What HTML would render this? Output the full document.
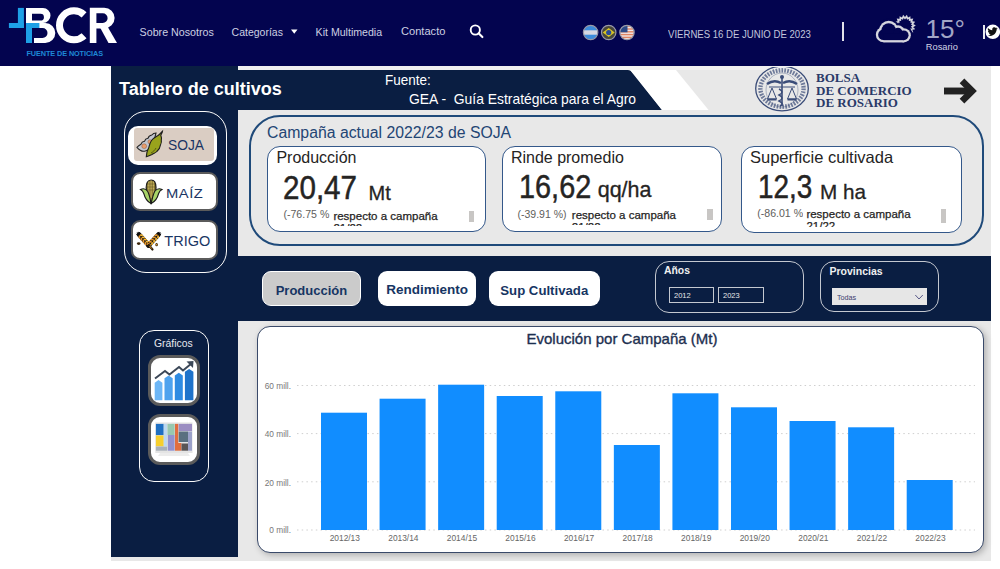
<!DOCTYPE html>
<html><head><meta charset="utf-8">
<style>
*{box-sizing:border-box;margin:0;padding:0}
html,body{width:1000px;height:569px;overflow:hidden;background:#fff;position:relative;font-family:"Liberation Sans",sans-serif}
.a{position:absolute}
.t{position:absolute;white-space:nowrap;line-height:1}
</style></head><body>
<!-- HEADER -->
<div class="a" id="hdr" style="left:0;top:0;width:1000px;height:66px;background:#03044f"></div>
<svg class="a" style="left:0;top:0" width="125" height="66">
  <g fill="#fff">
    <path fill-rule="evenodd" d="M26 8 H43 A7.5 7.5 0 0 1 43 23 H26 Z M32 13.7 H40.5 A3.45 3.45 0 0 1 40.5 20.6 H32 Z"/>
    <path fill-rule="evenodd" d="M34 23 H45.3 A10 10 0 0 1 45.3 43 H34 Z M34 28 H42.5 A5 5 0 0 1 42.5 38 H34 Z"/>
    <path d="M84.07 14.87 A14.5 14.5 0 1 0 84.07 35.73" fill="none" stroke="#fff" stroke-width="7"/>
    <path fill-rule="evenodd" d="M89.8 7.7 H104.25 A10.35 10.35 0 0 1 104.25 28.4 H96.4 V43 H89.8 Z M96.4 13.3 H102.75 A4.85 4.85 0 0 1 102.75 23 H96.4 Z"/>
    <path d="M99.5 26.5 H107.5 L117 43 H108.5 Z"/>
  </g>
  <g fill="#1ea0e6">
    <rect x="17.9" y="7.9" width="6" height="20.1"/>
    <rect x="8.9" y="23" width="15" height="5"/>
    <rect x="26" y="23" width="6" height="20"/>
    <rect x="26" y="23" width="13.4" height="5"/>
  </g>
</svg>
<div class="t" style="left:26.5px;top:49.6px;font-size:7.3px;font-weight:bold;color:#1e88d6;letter-spacing:-0.1px">FUENTE DE NOTICIAS</div>
<div class="t" style="left:139.6px;top:26.6px;font-size:10.7px;color:#cdd0e2">Sobre Nosotros</div>
<div class="t" style="left:231.6px;top:26.7px;font-size:10.5px;color:#cdd0e2">Categorías</div>
<svg class="a" style="left:290px;top:29px" width="9" height="6"><path d="M1 0.5 H7.5 L4.25 4.8 Z" fill="#fff"/></svg>
<div class="t" style="left:315.6px;top:26.6px;font-size:10.6px;color:#cdd0e2">Kit Multimedia</div>
<div class="t" style="left:401px;top:26.2px;font-size:11.1px;color:#cdd0e2">Contacto</div>
<svg class="a" style="left:467.2px;top:22.3px" width="20" height="18">
  <circle cx="8.3" cy="8" r="4.6" fill="none" stroke="#fff" stroke-width="1.9"/>
  <path d="M11.6 11.3 L15.4 15.1" stroke="#fff" stroke-width="2.1" stroke-linecap="round"/>
</svg>
<svg class="a" style="left:580px;top:22px" width="60" height="22">
  <defs>
    <clipPath id="c1"><circle cx="10.6" cy="10.5" r="7"/></clipPath>
    <clipPath id="c2"><circle cx="28.7" cy="10.5" r="7"/></clipPath>
    <clipPath id="c3"><circle cx="47" cy="10.5" r="7"/></clipPath>
  </defs>
  <g clip-path="url(#c1)"><rect x="0" y="0" width="20" height="22" fill="#3c8cdc"/><rect x="0" y="8.3" width="20" height="4.4" fill="#d6d8e2"/></g>
  <g clip-path="url(#c2)"><rect x="18" y="0" width="20" height="22" fill="#47473a"/><path d="M22.7 10.5 L28.7 6 L34.7 10.5 L28.7 15 Z" fill="#d8c424"/><circle cx="28.7" cy="10.5" r="2.6" fill="#2a4a98"/></g>
  <g clip-path="url(#c3)"><rect x="38" y="0" width="20" height="22" fill="#f0e6e6"/>
    <rect x="38" y="3.5" width="20" height="1.4" fill="#e08462"/><rect x="38" y="6.3" width="20" height="1.4" fill="#e08462"/><rect x="38" y="9.1" width="20" height="1.4" fill="#e08462"/><rect x="38" y="11.9" width="20" height="1.4" fill="#e08462"/><rect x="38" y="14.7" width="20" height="1.4" fill="#e08462"/><rect x="38" y="17.5" width="20" height="1.4" fill="#e08462"/>
    <rect x="38" y="2" width="9.5" height="8.3" fill="#2c4a88"/></g>
  <circle cx="10.6" cy="10.5" r="7.2" fill="none" stroke="#9a9aa8" stroke-width="1.2"/>
  <circle cx="28.7" cy="10.5" r="7.2" fill="none" stroke="#9a9aa8" stroke-width="1.2"/>
  <circle cx="47" cy="10.5" r="7.2" fill="none" stroke="#9a9aa8" stroke-width="1.2"/>
</svg>
<div class="t" style="left:667.5px;top:28.6px;font-size:10.6px;color:#c2c6dc;transform:scaleX(0.905);transform-origin:0 0">VIERNES 16 DE JUNIO DE 2023</div>
<div class="a" style="left:841.5px;top:22px;width:2px;height:19px;background:#e2e2ea"></div>
<svg class="a" style="left:870px;top:10px" width="52" height="38">
  <polygon points="44.20,15.50 42.19,16.77 43.65,18.65 41.32,19.15 42.05,21.41 39.69,21.09 39.60,23.47 37.50,22.36 36.60,24.56 35.00,22.80 33.40,24.56 32.50,22.36 30.40,23.47 30.31,21.09 27.95,21.41 28.68,19.15 26.35,18.65 27.81,16.77 25.80,15.50 27.81,14.23 26.35,12.35 28.68,11.85 27.95,9.59 30.31,9.91 30.40,7.53 32.50,8.64 33.40,6.44 35.00,8.20 36.60,6.44 37.50,8.64 39.60,7.53 39.69,9.91 42.05,9.59 41.32,11.85 43.65,12.35 42.19,14.23" fill="none" stroke="#d6d6de" stroke-width="1.7"/>
  <circle cx="13.5" cy="24.7" r="9.7" fill="#03044f"/><circle cx="18.7" cy="20.3" r="11.5" fill="#03044f"/><circle cx="28" cy="22" r="8.7" fill="#03044f"/><circle cx="33.7" cy="25.3" r="9.2" fill="#03044f"/><rect x="13.5" y="18.8" width="20.2" height="15.700000000000001" fill="#03044f"/>
  <circle cx="13.5" cy="24.7" r="7.65" fill="#d6d6de"/><circle cx="18.7" cy="20.3" r="9.450000000000001" fill="#d6d6de"/><circle cx="28" cy="22" r="6.65" fill="#d6d6de"/><circle cx="33.7" cy="25.3" r="7.15" fill="#d6d6de"/><rect x="13.5" y="20.85" width="20.2" height="11.600000000000001" fill="#d6d6de"/>
  <circle cx="13.5" cy="24.7" r="5.35" fill="#03044f"/><circle cx="18.7" cy="20.3" r="7.15" fill="#03044f"/><circle cx="28" cy="22" r="4.35" fill="#03044f"/><circle cx="33.7" cy="25.3" r="4.85" fill="#03044f"/><rect x="13.5" y="23.15" width="20.2" height="7.000000000000001" fill="#03044f"/>
</svg>
<div class="t" style="left:925.5px;top:16.3px;font-size:26px;color:#a2a6c6">15°</div>
<div class="t" style="left:925.8px;top:42.8px;font-size:9.3px;color:#d2d4e4">Rosario</div>
<div class="a" style="left:983px;top:24.7px;width:2px;height:14px;background:#e8e8ee"></div>
<svg class="a" style="left:984px;top:22px" width="16" height="20">
  <circle cx="8.8" cy="9.8" r="7.3" fill="#fff"/>
  <g transform="translate(8.8 9.8) scale(1.15) translate(-8.8 -9.2)"><path d="M4.5 12.5 C7 13.2 10 12.5 11.5 9.5 C12 8.5 12.2 7.6 12.2 7 L13.2 6.2 L12 6.4 L12.6 5.4 L11.5 5.8 C10.7 4.9 9 5 8.4 6.4 C8.2 7 8.3 7.4 8.4 7.8 C6.8 7.7 5.6 7 4.6 5.9 C4.2 7 4.6 8 5.3 8.6 L4.6 8.4 C4.7 9.4 5.3 10 6.1 10.3 L5.4 10.4 C5.7 11.1 6.4 11.5 7.1 11.6 C6.4 12.2 5.5 12.5 4.5 12.5 Z" fill="#111"/></g>
</svg>

<!-- DASHBOARD BG -->
<div class="a" style="left:111px;top:66px;width:880px;height:495px;background:#e8e8e8"></div>
<div class="a" style="left:111px;top:66px;width:127px;height:491px;background:#0a1e42"></div>
<div class="a" style="left:238px;top:66px;width:753px;height:3.5px;background:#f0f0f0"></div>
<svg class="a" style="left:238px;top:70px" width="480" height="40">
  <path d="M0 0 H390 Q393 0 395 3 L424 40 H0 Z" fill="#0a1e42"/>
  <path d="M392 0 H438 L470.6 40 H424 Z" fill="#fff"/>
</svg>
<div class="t" style="left:119px;top:80.2px;font-size:18px;font-weight:bold;color:#fff">Tablero de cultivos</div>
<div class="t" style="left:384.5px;top:72.8px;font-size:14.5px;color:#fff;transform:scaleX(0.93);transform-origin:0 0">Fuente:</div>
<div class="t" style="left:409.3px;top:92.1px;font-size:14.5px;color:#fff;transform:scaleX(0.958);transform-origin:0 0">GEA -&nbsp; Guía Estratégica para el Agro</div>



<!-- BCR logo in banner -->
<svg class="a" style="left:750px;top:67px" width="64" height="46">
  <g fill="none" stroke="#3a4c78" transform="translate(0,-1)">
    <ellipse cx="32" cy="22.5" rx="26.3" ry="22.3" stroke-width="1.3"/>
    <ellipse cx="32" cy="22.5" rx="21.6" ry="18.2" stroke-width="4.4" stroke-dasharray="1.7 1.2" opacity="0.7"/>
    <ellipse cx="32" cy="24" rx="16" ry="17" stroke-width="0.7" opacity="0.5"/>
    <path d="M32 10 V40" stroke-width="1.6"/>
    <path d="M17 18 Q24 13 31 17 M47 18 Q40 13 33 17" stroke-width="2.4"/>
    <path d="M19 21 H45" stroke-width="1"/>
    <path d="M22 22 L17.5 33 H26.5 Z M42 22 L37.5 33 H46.5 Z" stroke-width="1"/>
    <path d="M17.5 33.5 H26.5 M37.5 33.5 H46.5" stroke-width="1.8"/>
    <path d="M29 23 Q35 26 29 29 Q35 32 29 35 Q35 38 30 40" stroke-width="1.4"/>
  </g>
  <circle cx="32" cy="10" r="2" fill="#3a4c78"/>
</svg>
<div class="t" style="left:816px;top:70.91px;font-size:13px;color:#2a3a68;font-family:'Liberation Serif',serif;font-weight:bold">BOLSA</div>
<div class="t" style="left:816px;top:83.51px;font-size:13px;color:#2a3a68;font-family:'Liberation Serif',serif;font-weight:bold">DE COMERCIO</div>
<div class="t" style="left:816px;top:95.71px;font-size:13px;color:#2a3a68;font-family:'Liberation Serif',serif;font-weight:bold">DE ROSARIO</div>
<svg class="a" style="left:940px;top:76px" width="40" height="30">
  <path d="M4 15 H31" stroke="#222" stroke-width="6.9"/>
  <path d="M22 4.8 L32.2 15 L22 25.2" fill="none" stroke="#222" stroke-width="6.6" stroke-linejoin="miter"/>
</svg>

<!-- SIDEBAR -->
<div class="a" style="left:123.5px;top:110.5px;width:103px;height:162px;border:1.9px solid #fafafa;border-radius:22px"></div>
<div class="a" style="left:128.3px;top:125.5px;width:89px;height:39.3px;background:#fff;border-radius:10px"></div>
<div class="a" style="left:133.8px;top:127.9px;width:80.2px;height:33px;background:#dacdc3;border-radius:3px"></div>
<svg class="a" style="left:134px;top:128px" width="32" height="32">
  <path d="M3 19.3 C4.5 17.5 6 16.8 7 16.2 C7.5 14.5 9 13.5 10.5 13.3 C11 11.5 12.5 10.5 14 10.3 C14.5 8.5 16 7.3 17.8 7 C19 5.5 20.5 5 22 5 L19 17 C17 20 14 22.5 10.5 23.2 C7.5 23.5 5 21.8 3 19.3 Z" fill="#c3c6cf" stroke="#222" stroke-width="1.1"/>
  <circle cx="10.2" cy="18.2" r="2.4" fill="#e99c6c" stroke="#7a4a2a" stroke-width="0.4"/>
  <circle cx="16" cy="13.8" r="2.1" fill="#e99c6c" stroke="#7a4a2a" stroke-width="0.4"/>
  <path d="M12.3 28.8 C12.3 25 13.5 22 14.8 19.5 C15.5 17 16 14.5 17.5 12.5 C19.5 10 21.5 9 24 7.5 C25.5 6.5 26.5 5 28.5 3.2 C28.3 5 27.3 6 26.8 7.2 C27.3 8.5 27.8 10 27.3 12 C27.8 14 27 16 26.3 17.5 C26.2 20 24.5 22 22.8 23.5 C21.5 25 19.5 25.5 18 26.5 C16 27.5 14.3 28.2 12.3 28.8 Z" fill="#99a31c" stroke="#1e1e1e" stroke-width="1.1"/>
  <path d="M17 25 C19 24 21 22 22 20" fill="none" stroke="#3a3a10" stroke-width="0.7"/>
</svg>
<div class="t" style="left:168px;top:139px;font-size:13.8px;color:#1a3563">SOJA</div>

<div class="a" style="left:130.5px;top:172.3px;width:87px;height:39.2px;background:#fff;border:2px solid #5b5b5b;border-radius:9px"></div>
<svg class="a" style="left:136px;top:176px" width="32" height="32">
  <path d="M15.1 4 C18.6 4 20 7.5 20 11.5 C20 17 18 22 15.1 27 C12.2 22 10.2 17 10.2 11.5 C10.2 7.5 11.6 4 15.1 4 Z" fill="#8c7c34" stroke="#1a1a1a" stroke-width="1.2"/>
  <path d="M12.8 5.5 V19 M15.1 4.5 V22 M17.4 5.5 V19" stroke="#d4bf66" stroke-width="0.9"/>
  <path d="M10.5 8 H19.7 M10.3 11 H19.9 M10.5 14 H19.7" stroke="#5a4a20" stroke-width="0.5"/>
  <path d="M4.5 13.5 C7.5 12 10 13 11.8 15.5 C13.2 18.5 14.2 22.5 15 27.5 C11 25.5 8.8 21.5 7.8 17.5 C7.2 15.5 6.2 14.3 4.5 13.5 Z" fill="#a8d468" stroke="#1a1a1a" stroke-width="1.1"/>
  <path d="M26 13.5 C23 12 20.5 13 18.6 15.5 C17.2 18.5 16.2 22.5 15.2 27.5 C19.4 25.5 21.6 21.5 22.6 17.5 C23.2 15.5 24.3 14.3 26 13.5 Z" fill="#a8d468" stroke="#1a1a1a" stroke-width="1.1"/>
</svg>
<div class="t" style="left:166.2px;top:186.6px;font-size:13.4px;color:#1a3563;letter-spacing:0.5px;transform:scaleX(1.1);transform-origin:0 0">MAÍZ</div>

<div class="a" style="left:130.5px;top:220px;width:87px;height:39.7px;background:#fff;border:2px solid #5b5b5b;border-radius:9px"></div>
<svg class="a" style="left:132px;top:224px" width="34" height="32">
  <path d="M7 10.5 L16.9 21.5" stroke="#111" stroke-width="4.8" stroke-linecap="round"/><ellipse cx="9.36" cy="11.18" rx="1.7" ry="0.95" transform="rotate(8.0 9.36 11.18)" fill="#f6b838"/><ellipse cx="7.43" cy="12.92" rx="1.7" ry="0.95" transform="rotate(88.0 7.43 12.92)" fill="#e8962a"/><ellipse cx="11.34" cy="13.38" rx="1.7" ry="0.95" transform="rotate(8.0 11.34 13.38)" fill="#f6b838"/><ellipse cx="9.41" cy="15.12" rx="1.7" ry="0.95" transform="rotate(88.0 9.41 15.12)" fill="#e8962a"/><ellipse cx="13.32" cy="15.58" rx="1.7" ry="0.95" transform="rotate(8.0 13.32 15.58)" fill="#f6b838"/><ellipse cx="11.39" cy="17.32" rx="1.7" ry="0.95" transform="rotate(88.0 11.39 17.32)" fill="#e8962a"/><ellipse cx="15.30" cy="17.78" rx="1.7" ry="0.95" transform="rotate(8.0 15.30 17.78)" fill="#f6b838"/><ellipse cx="13.37" cy="19.52" rx="1.7" ry="0.95" transform="rotate(88.0 13.37 19.52)" fill="#e8962a"/><ellipse cx="17.28" cy="19.98" rx="1.7" ry="0.95" transform="rotate(8.0 17.28 19.98)" fill="#f6b838"/><ellipse cx="15.35" cy="21.72" rx="1.7" ry="0.95" transform="rotate(88.0 15.35 21.72)" fill="#e8962a"/><path d="M8.11 9.50 l-1.47 -1.64 M5.89 11.50 l-1.47 -1.64 M7.00 10.50 l-1.87 -2.08" stroke="#111" stroke-width="0.9"/>
  <path d="M26.5 10.5 L16.5 21.5" stroke="#111" stroke-width="4.8" stroke-linecap="round"/><ellipse cx="26.06" cy="12.92" rx="1.7" ry="0.95" transform="rotate(92.3 26.06 12.92)" fill="#f6b838"/><ellipse cx="24.13" cy="11.17" rx="1.7" ry="0.95" transform="rotate(172.3 24.13 11.17)" fill="#e8962a"/><ellipse cx="24.06" cy="15.12" rx="1.7" ry="0.95" transform="rotate(92.3 24.06 15.12)" fill="#f6b838"/><ellipse cx="22.13" cy="13.37" rx="1.7" ry="0.95" transform="rotate(172.3 22.13 13.37)" fill="#e8962a"/><ellipse cx="22.06" cy="17.32" rx="1.7" ry="0.95" transform="rotate(92.3 22.06 17.32)" fill="#f6b838"/><ellipse cx="20.13" cy="15.57" rx="1.7" ry="0.95" transform="rotate(172.3 20.13 15.57)" fill="#e8962a"/><ellipse cx="20.06" cy="19.52" rx="1.7" ry="0.95" transform="rotate(92.3 20.06 19.52)" fill="#f6b838"/><ellipse cx="18.13" cy="17.77" rx="1.7" ry="0.95" transform="rotate(172.3 18.13 17.77)" fill="#e8962a"/><ellipse cx="18.06" cy="21.72" rx="1.7" ry="0.95" transform="rotate(92.3 18.06 21.72)" fill="#f6b838"/><ellipse cx="16.13" cy="19.97" rx="1.7" ry="0.95" transform="rotate(172.3 16.13 19.97)" fill="#e8962a"/><path d="M27.61 11.51 l1.48 -1.63 M25.39 9.49 l1.48 -1.63 M26.50 10.50 l1.88 -2.07" stroke="#111" stroke-width="0.9"/>
  <path d="M16.7 21 L20.5 25.5" stroke="#2a1a08" stroke-width="2.2" stroke-linecap="round"/>
  <path d="M17.5 22 L19.8 24.6" stroke="#e8a030" stroke-width="0.9"/>
  <ellipse cx="6.7" cy="19.6" rx="1.8" ry="1.3" fill="#3a2408"/>
  <ellipse cx="24.6" cy="20.7" rx="1.3" ry="1.6" fill="#3a2408"/><circle cx="24.6" cy="20.7" r="0.7" fill="#e8a030"/>
</svg>
<div class="t" style="left:164.3px;top:233.8px;font-size:14.5px;color:#1a3563">TRIGO</div>

<div class="a" style="left:138.5px;top:330px;width:70px;height:151.5px;border:1.9px solid #fafafa;border-radius:15px"></div>
<div class="t" style="left:154px;top:337.5px;font-size:10.8px;transform:scaleX(0.96);transform-origin:0 0;color:#e8e8ee">Gráficos</div>
<div class="a" style="left:148.2px;top:355px;width:52px;height:51px;background:#fff;border:3px solid #5b5b5b;border-radius:12px"></div>
<svg class="a" style="left:148px;top:355px" width="52" height="51">
  <path d="M6.7 27.7 L10.5 25 L14.4 27.7 V45.2 H6.7 Z" fill="#6cb6f6"/>
  <path d="M16.5 23.3 L20.6 20.5 L24.7 23.3 V45.2 H16.5 Z" fill="#4ea2ee"/>
  <path d="M26.8 20.5 L30.8 17.7 L34.8 20.5 V45.2 H26.8 Z" fill="#2f8be2"/>
  <path d="M36.9 16.7 L41.1 13.9 L45.4 16.7 V45.2 H36.9 Z" fill="#1f73cb"/>
  <path d="M7 23.5 L17 16 L21.5 19.5 L31 12 L35 15.5 L43.5 8.5" fill="none" stroke="#3c4858" stroke-width="2"/>
  <path d="M38.5 6.5 L45.5 6 L45 13 Z" fill="#3c4858"/>
</svg>
<div class="a" style="left:148.2px;top:414px;width:52px;height:50.5px;background:#fff;border:3px solid #5b5b5b;border-radius:12px"></div>
<svg class="a" style="left:148px;top:414px" width="52" height="51">
  <rect x="7.3" y="8.4" width="37.2" height="30.6" fill="#e4e4e4"/>
  <path d="M12 39 L10 42 H42 L40 39 Z" fill="#ececec"/>
  <rect x="7.9" y="9.9" width="7.8" height="11.2" fill="#1f6fc2"/>
  <rect x="7.9" y="21.5" width="7.8" height="10.8" fill="#f6cf2e"/>
  <rect x="7.9" y="32.5" width="11.2" height="4.2" fill="#a9b1b9"/>
  <rect x="15.7" y="9.9" width="3.4" height="22.4" fill="#bcd8f0"/>
  <rect x="19.5" y="9.9" width="7.1" height="11.1" fill="#98c8b0"/>
  <rect x="19.8" y="21" width="6.8" height="15.7" fill="#9292d0"/>
  <rect x="27" y="9.9" width="3.3" height="19.1" fill="#e06e40"/>
  <rect x="30.7" y="9.9" width="13.3" height="7.1" fill="#9b8dc2"/>
  <rect x="30.7" y="17.5" width="9.3" height="10.5" fill="#5a7080"/>
  <rect x="40" y="17.5" width="4" height="19.2" fill="#9ca2ca"/>
  <rect x="27" y="29" width="6.4" height="7.7" fill="#e06e40"/>
  <rect x="33.5" y="29.5" width="6.5" height="7.2" fill="#5a5656"/>
</svg>

<!-- Campaña box -->
<div class="a" style="left:249.2px;top:115px;width:734.6px;height:131.2px;border:2px solid #1f4a7a;border-radius:31px"></div>
<div class="t" style="left:267px;top:125px;font-size:15.8px;color:#234574">Campaña actual 2022/23 de SOJA</div>

<div class="a" style="left:267px;top:146px;width:219px;height:86px;background:#fff;border:1px solid #34588a;border-radius:13px"></div>
<div class="a" style="left:502px;top:145.5px;width:220px;height:86.5px;background:#fff;border:1px solid #34588a;border-radius:13px"></div>
<div class="a" style="left:741px;top:145.5px;width:221px;height:87px;background:#fff;border:1px solid #34588a;border-radius:13px"></div>

<div class="t" style="left:276.4px;top:150.46px;font-size:16px;color:#252423;">Producción</div>
<div class="t" style="left:283px;top:170.87px;font-size:33px;color:#252423;transform:scaleX(0.896);-webkit-text-stroke:0.5px #252423;transform-origin:0 0">20,47</div>
<div class="t" style="left:368.5px;top:183.47px;font-size:20px;color:#252423;;-webkit-text-stroke:0.3px #252423">Mt</div>
<div class="t" style="left:283.4px;top:208.63px;font-size:10.6px;color:#605e5c;">(-76.75 %</div>
<div class="a" style="left:330px;top:206px;width:136px;height:19.5px;overflow:hidden;background:#fff"><div class="t" style="left:3.4px;top:4.3px;font-size:11.5px;color:#252423;line-height:12px;-webkit-text-stroke:0.25px #252423">respecto a campaña<br>21/22</div></div>
<div class="a" style="left:468.8px;top:211px;width:5.5px;height:10.8px;background:#c8c6c4"></div>
<div class="t" style="left:510.9px;top:149.86px;font-size:16px;color:#252423;">Rinde promedio</div>
<div class="t" style="left:519.2px;top:170.47px;font-size:33px;color:#252423;transform:scaleX(0.875);-webkit-text-stroke:0.5px #252423;transform-origin:0 0">16,62</div>
<div class="t" style="left:597.7px;top:180.20px;font-size:21.5px;color:#252423;;-webkit-text-stroke:0.3px #252423">qq/ha</div>
<div class="t" style="left:517.5px;top:208.71px;font-size:10.5px;color:#605e5c;">(-39.91 %)</div>
<div class="a" style="left:569px;top:206px;width:135px;height:19px;overflow:hidden;background:#fff"><div class="t" style="left:2.8px;top:3px;font-size:11.5px;color:#252423;line-height:12px;-webkit-text-stroke:0.25px #252423">respecto a campaña<br>21/22</div></div>
<div class="a" style="left:706.8px;top:209.3px;width:5.9px;height:10.7px;background:#c8c6c4"></div>
<div class="t" style="left:750px;top:149.03px;font-size:16.5px;color:#252423;">Superficie cultivada</div>
<div class="t" style="left:758px;top:170.47px;font-size:33px;color:#252423;transform:scaleX(0.845);-webkit-text-stroke:0.5px #252423;transform-origin:0 0">12,3</div>
<div class="t" style="left:820px;top:181.98px;font-size:20.7px;color:#252423;;-webkit-text-stroke:0.3px #252423">M ha</div>
<div class="t" style="left:757.2px;top:208.03px;font-size:10.6px;color:#605e5c;">(-86.01 %</div>
<div class="a" style="left:803px;top:206px;width:136px;height:21px;overflow:hidden;background:#fff"><div class="t" style="left:3.4px;top:2px;font-size:11.5px;color:#252423;line-height:12px;-webkit-text-stroke:0.25px #252423">respecto a campaña<br>21/22</div></div>
<div class="a" style="left:941.3px;top:208.5px;width:5px;height:14px;background:#c8c6c4"></div>

<!-- dark filter band -->
<div class="a" style="left:238px;top:256px;width:753px;height:65px;background:#0a1e42"></div>

<!-- chart card -->
<div class="a" style="left:256.5px;top:326px;width:727px;height:227px;background:#fff;border:1.5px solid #3a4a6a;border-radius:13px;box-shadow:2px 2px 6px rgba(0,0,0,.25)"></div>

<div class="a" style="left:262px;top:271.3px;width:98.6px;height:35.2px;background:#cbcbcb;border:1.5px solid #fff;border-radius:9px"></div>
<div class="t" style="left:275.7px;top:284.00px;font-size:13px;color:#163563;font-weight:bold">Producción</div>
<div class="a" style="left:377.7px;top:270.8px;width:97.9px;height:35.2px;background:#fff;border-radius:9px"></div>
<div class="t" style="left:386.3px;top:283.37px;font-size:13.5px;color:#163563;font-weight:bold">Rendimiento</div>
<div class="a" style="left:488.8px;top:270.8px;width:111.6px;height:35.2px;background:#fff;border-radius:9px"></div>
<div class="t" style="left:500.3px;top:283.63px;font-size:13.2px;color:#163563;font-weight:bold">Sup Cultivada</div>
<div class="a" style="left:655px;top:260.6px;width:149px;height:52.8px;border:1.2px solid #c4c8d0;border-radius:14px"></div>
<div class="t" style="left:664px;top:265.70px;font-size:10.4px;color:#f0f0f0;font-weight:bold">Años</div>
<div class="a" style="left:669px;top:287px;width:45.3px;height:15.7px;border:1px solid #c4c8d0"></div>
<div class="a" style="left:718px;top:287px;width:46px;height:15.7px;border:1px solid #c4c8d0"></div>
<div class="t" style="left:673.5px;top:292.3px;font-size:8px;transform:scaleX(0.94);transform-origin:0 0;color:#e8e8e8;">2012</div>
<div class="t" style="left:722.6px;top:292.3px;font-size:8px;transform:scaleX(0.94);transform-origin:0 0;color:#e8e8e8;">2023</div>
<div class="a" style="left:820.4px;top:261.4px;width:118.4px;height:50.4px;border:1.2px solid #c4c8d0;border-radius:14px"></div>
<div class="t" style="left:829.5px;top:266.11px;font-size:10.5px;color:#f0f0f0;font-weight:bold">Provincias</div>
<div class="a" style="left:832px;top:287.8px;width:94.8px;height:16.8px;background:#e6e6e6"></div>
<div class="t" style="left:836.9px;top:293.5px;font-size:8px;transform:scaleX(0.9);transform-origin:0 0;color:#404070;">Todas</div>
<svg class="a" style="left:913px;top:293px" width="12" height="8"><path d="M2.3 2 L6 6 L9.8 2" fill="none" stroke="#5a5a8a" stroke-width="1"/></svg>
<div class="t" style="left:526.5px;top:331px;font-size:15px;color:#1d2f50;-webkit-text-stroke:0.35px #1d2f50">Evolución por Campaña (Mt)</div>
<svg class="a" style="left:0;top:0" width="1000" height="569"><line x1="297" y1="385.5" x2="975" y2="385.5" stroke="#cfcfcf" stroke-width="1" stroke-dasharray="1.5 3.2"/><line x1="297" y1="433.6" x2="975" y2="433.6" stroke="#cfcfcf" stroke-width="1" stroke-dasharray="1.5 3.2"/><line x1="297" y1="481.8" x2="975" y2="481.8" stroke="#cfcfcf" stroke-width="1" stroke-dasharray="1.5 3.2"/><line x1="297" y1="530" x2="975" y2="530" stroke="#cfcfcf" stroke-width="1" stroke-dasharray="1.5 3.2"/><rect x="321.00" y="412.7" width="46" height="117.30" fill="#118dff"/><rect x="379.57" y="398.7" width="46" height="131.30" fill="#118dff"/><rect x="438.14" y="384.7" width="46" height="145.30" fill="#118dff"/><rect x="496.71" y="396" width="46" height="134.00" fill="#118dff"/><rect x="555.28" y="391.3" width="46" height="138.70" fill="#118dff"/><rect x="613.85" y="445" width="46" height="85.00" fill="#118dff"/><rect x="672.42" y="393.3" width="46" height="136.70" fill="#118dff"/><rect x="730.99" y="407.3" width="46" height="122.70" fill="#118dff"/><rect x="789.56" y="421" width="46" height="109.00" fill="#118dff"/><rect x="848.13" y="427.3" width="46" height="102.70" fill="#118dff"/><rect x="906.70" y="480" width="46" height="50.00" fill="#118dff"/></svg>
<div class="t" style="left:190px;width:101px;text-align:right;top:381.87px;font-size:8.3px;color:#777">60 mill.</div>
<div class="t" style="left:190px;width:101px;text-align:right;top:430.17px;font-size:8.3px;color:#777">40 mill.</div>
<div class="t" style="left:190px;width:101px;text-align:right;top:478.57px;font-size:8.3px;color:#777">20 mill.</div>
<div class="t" style="left:190px;width:101px;text-align:right;top:526.17px;font-size:8.3px;color:#777">0 mill.</div>
<div class="t" style="left:319.80px;width:50px;text-align:center;top:533.59px;font-size:8.4px;color:#666">2012/13</div>
<div class="t" style="left:378.37px;width:50px;text-align:center;top:533.59px;font-size:8.4px;color:#666">2013/14</div>
<div class="t" style="left:436.94px;width:50px;text-align:center;top:533.59px;font-size:8.4px;color:#666">2014/15</div>
<div class="t" style="left:495.51px;width:50px;text-align:center;top:533.59px;font-size:8.4px;color:#666">2015/16</div>
<div class="t" style="left:554.08px;width:50px;text-align:center;top:533.59px;font-size:8.4px;color:#666">2016/17</div>
<div class="t" style="left:612.65px;width:50px;text-align:center;top:533.59px;font-size:8.4px;color:#666">2017/18</div>
<div class="t" style="left:671.22px;width:50px;text-align:center;top:533.59px;font-size:8.4px;color:#666">2018/19</div>
<div class="t" style="left:729.79px;width:50px;text-align:center;top:533.59px;font-size:8.4px;color:#666">2019/20</div>
<div class="t" style="left:788.36px;width:50px;text-align:center;top:533.59px;font-size:8.4px;color:#666">2020/21</div>
<div class="t" style="left:846.93px;width:50px;text-align:center;top:533.59px;font-size:8.4px;color:#666">2021/22</div>
<div class="t" style="left:905.50px;width:50px;text-align:center;top:533.59px;font-size:8.4px;color:#666">2022/23</div>
</body></html>
